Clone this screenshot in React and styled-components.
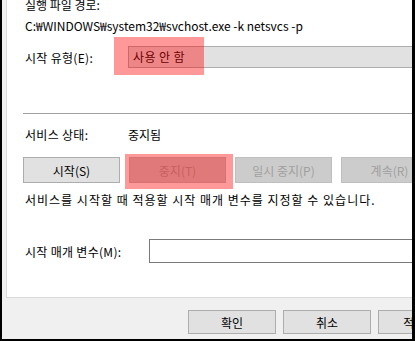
import React from 'react';
import styled, { createGlobalStyle } from 'styled-components';

const Global = createGlobalStyle`
  html, body { margin: 0; padding: 0; background: #fff; }
  body { font-family: "Noto Sans CJK KR", "Noto Sans", sans-serif; font-size: 12px; color: #000; }
`

const Frame = styled.div`
  box-sizing: border-box;
  width: 415px;
  height: 341px;
  border-left: 2px solid #000;
  border-right: 3px solid #000;
  border-bottom: 2px solid #000;
  background: #f0f0f0;
  padding-left: 4px;
  display: flex;
  flex-direction: column;
  overflow: hidden;
`

const Panel = styled.div`
  box-sizing: border-box;
  height: 298px;
  background: #fff;
  border-left: 1px solid #dadada;
  border-bottom: 1px solid #dadada;
  padding-left: 18px;
  overflow: hidden;
  display: flex;
  flex-direction: column;
`

const Line = styled.div`
  line-height: 20px;
  height: 20px;
  white-space: nowrap;
  margin-top: ${p => p.$top || 0}px;
  letter-spacing: ${p => p.$ls || 0}px;
`

const Row = styled.div`
  display: flex;
  align-items: center;
  white-space: nowrap;
  height: ${p => p.$h || 20}px;
  margin-top: ${p => p.$top || 0}px;
`

const Label = styled.div`
  flex: none;
  width: ${p => p.$w}px;
  letter-spacing: 0.3px;
`

const Combo = styled.div`
  position: relative;
  box-sizing: border-box;
  flex: none;
  width: 320px;
  height: 22px;
  line-height: 20px;
  padding-left: 4px;
  background: #e1e1e1;
  border: 1px solid #adadad;
  letter-spacing: 0.4px;
`

const Highlight = styled.div`
  position: absolute;
  left: ${p => p.$l}px;
  top: ${p => p.$t}px;
  width: ${p => p.$w}px;
  height: ${p => p.$h}px;
  background: rgba(255, 0, 0, 0.4);
  pointer-events: none;
`

const Rule = styled.div`
  height: 1px;
  background: #a0a0a0;
  margin: 45px 0 0 -2px;
`

const ButtonRow = styled.div`
  display: flex;
  gap: 9px;
  margin: 13px 0 0 -2px;
`

const Button = styled.div`
  position: relative;
  box-sizing: border-box;
  flex: none;
  width: ${p => p.$w || 97}px;
  height: ${p => p.$h || 26}px;
  display: flex;
  align-items: center;
  justify-content: center;
  background: ${p => (p.$off ? '#cccccc' : '#e1e1e1')};
  border: 1px solid ${p => (p.$off ? '#bfbfbf' : '#adadad')};
  color: ${p => (p.$off ? '#a0a0a0' : '#000')};
`

const Field = styled.div`
  box-sizing: border-box;
  flex: none;
  width: 300px;
  height: 24px;
  background: #fff;
  border: 1px solid #7a7a7a;
`

const Footer = styled.div`
  display: flex;
  gap: 7px;
  padding: 12px 0 0 182px;
`

export default function App() {
  return (
    <>
      <Global />
      <Frame>
        <Panel>
          <Line $top={-5}>실행 파일 경로:</Line>
          <Line $top={1}>C:₩WINDOWS₩system32₩svchost.exe -k netsvcs -p</Line>
          <Row $h={22} $top={10}>
            <Label $w={103}>시작 유형(E):</Label>
            <Combo>
              사용 안 함
              <Highlight $l={-15} $t={-10} $w={90} $h={38} />
            </Combo>
          </Row>
          <Rule />
          <Row $top={10}>
            <Label $w={103}>서비스 상태:</Label>
            <div>중지됨</div>
          </Row>
          <ButtonRow>
            <Button>시작(S)</Button>
            <Button $off>
              중지(T)
              <Highlight $l={-5} $t={-4} $w={108} $h={35} />
            </Button>
            <Button $off>일시 중지(P)</Button>
            <Button $off>계속(R)</Button>
          </ButtonRow>
          <Line $top={7} $ls={1}>서비스를 시작할 때 적용할 시작 매개 변수를 지정할 수 있습니다.</Line>
          <Row $h={24} $top={29}>
            <Label $w={124}>시작 매개 변수(M):</Label>
            <Field />
          </Row>
        </Panel>
        <Footer>
          <Button $w={88} $h={24}>확인</Button>
          <Button $w={88} $h={24}>취소</Button>
          <Button $w={88} $h={24}>적용(A)</Button>
        </Footer>
      </Frame>
    </>
  );
}
